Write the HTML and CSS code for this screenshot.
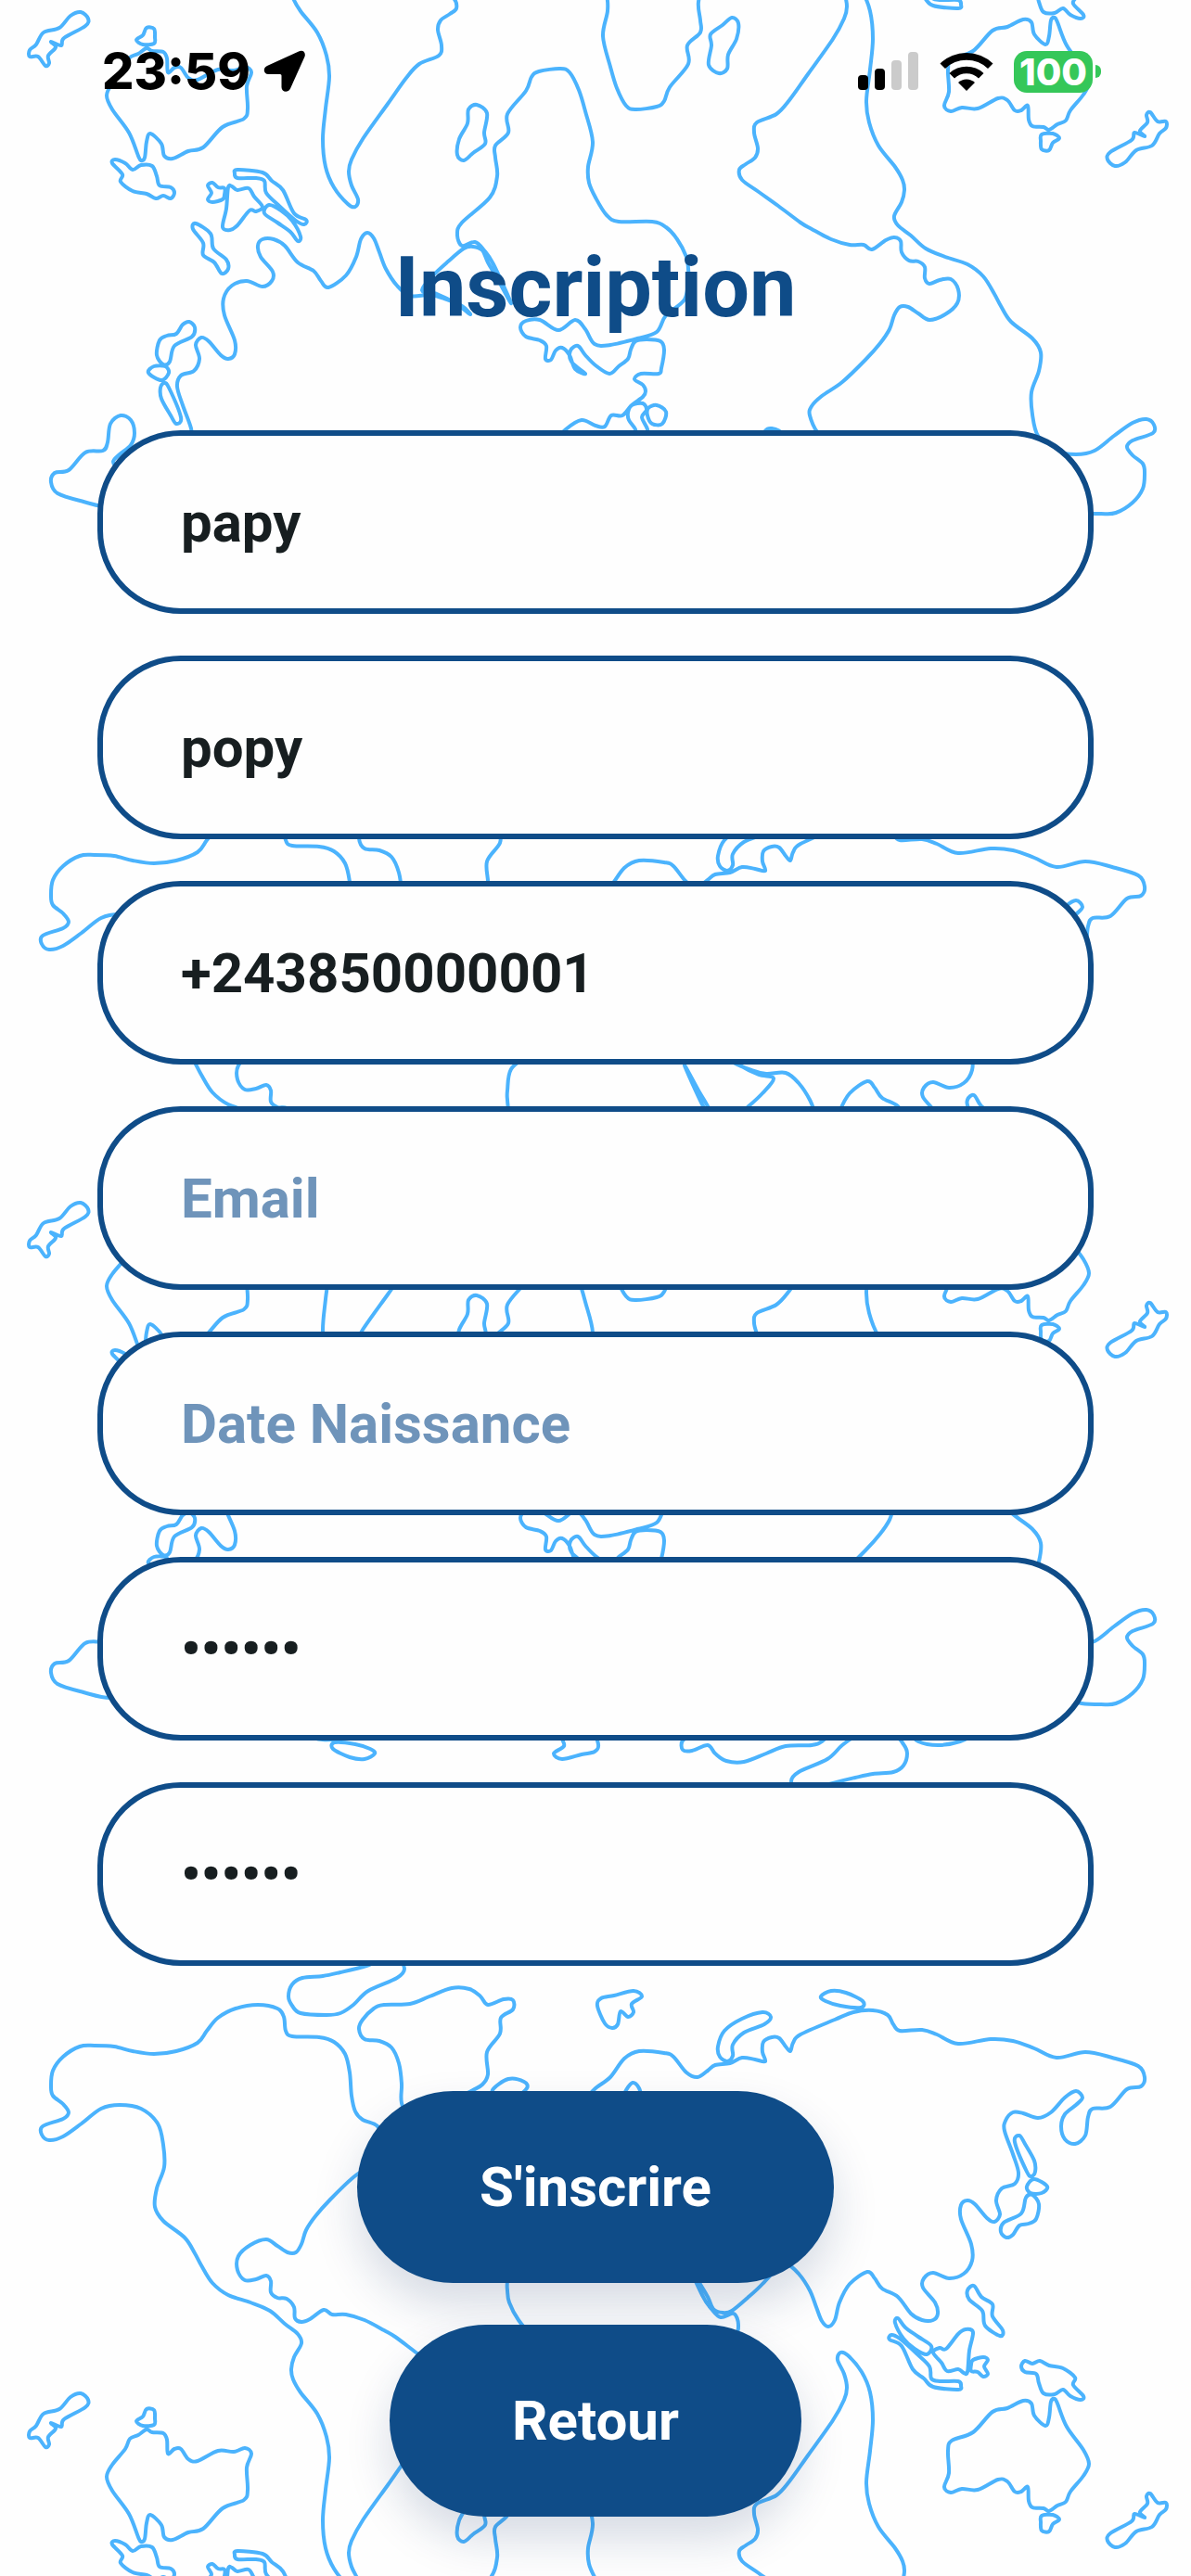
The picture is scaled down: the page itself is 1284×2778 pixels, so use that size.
FILE: index.html
```
<!doctype html>
<html lang="fr">
<head>
	<meta charset="utf-8">
	<meta name="viewport" content="width=device-width, initial-scale=1">
	<title>Inscription</title>
	<link rel="stylesheet" href="styles.css">
</head>
<body>
	<svg class="map" viewBox="0 0 1284 2778" preserveAspectRatio="xMidYMin slice" aria-hidden="true">
		<defs>
			<path id="world" d=""/>
		</defs>
		<use href="#world" transform="translate(0 -568)"/>
		<use href="#world" transform="translate(0 716)"/>
		<use href="#world" transform="translate(0 2000)"/>
		<use href="#world" transform="translate(1289 760) rotate(180)"/>
		<use href="#world" transform="translate(1289 2044) rotate(180)"/>
		<use href="#world" transform="translate(1289 3328) rotate(180)"/>
	</svg>

	<div class="screen">
		<header class="status">
			<div class="status-left">
				<span class="time">23:59</span>
				<svg class="arrow" width="46" height="46" viewBox="0 0 46 46">
					<path d="M38 1.500C42 -0.500 46 2 44.500 7L29 41.500C26.500 46.500 19.500 45.500 19.500 40V27.500Q19.500 26 18 26H5.500C0 26 -1 19.500 4 17Z"/>
				</svg>
			</div>
			<div class="status-right">
				<svg width="66" height="42" viewBox="0 0 66 42">
					<rect x="0" y="25" width="11" height="16" rx="4"/>
					<rect x="18" y="18" width="11" height="23" rx="4"/>
					<rect x="36" y="9" width="11" height="32" rx="4" fill="#cbcbcb"/>
					<rect x="54" y="0" width="11" height="41" rx="4" fill="#cbcbcb"/>
				</svg>
				<svg width="58" height="42" viewBox="0 0 58 42">
					<path d="M0.500 12.500A41 41 0 0 1 57.500 12.500L52 18A33 33 0 0 0 6 18Z"/>
					<path d="M10.500 23A27 27 0 0 1 47.500 23L42 28.500A19 19 0 0 0 16 28.500Z"/>
					<path d="M20 33A13 13 0 0 1 38 33L29 42Z"/>
				</svg>
				<div class="battery"><span class="level">100</span></div>
			</div>
		</header>

		<h1>Inscription</h1>

		<form class="signup">
			<input type="text" aria-label="Nom" value="papy">
			<input type="text" aria-label="Prénom" value="popy">
			<input type="tel" aria-label="Téléphone" value="+243850000001">
			<input type="email" aria-label="Email" placeholder="Email">
			<input type="text" aria-label="Date Naissance" placeholder="Date Naissance">
			<input type="password" aria-label="Mot de passe" value="papy12">
			<input type="password" aria-label="Confirmer le mot de passe" value="papy12">
			<div class="actions">
				<button type="submit">S'inscrire</button>
				<button type="button">Retour</button>
			</div>
		</form>
	</div>
	<script src="script.js"></script>
</body>
</html>
```
FILE: styles.css
```
* {
	box-sizing: border-box;
}

body {
	margin: 0;
	background-color: #fefefe;
	font-family: Roboto, sans-serif;
}

/* coastlines behind the form */
.map {
	position: absolute;
	top: 0;
	left: 0;
	width: 100%;
	height: 100%;
	fill: none;
	stroke: #4bb3fd;
	stroke-width: 4px;
	stroke-linejoin: round;
}

.screen {
	position: relative;
	min-height: 100vh;
	padding: 0 105px 64px;
}

.status {
	display: flex;
	justify-content: space-between;
	align-items: center;
	height: 154px;
	margin-right: -8px;
	padding-left: 5px;
	font-family: Inter, sans-serif;
	font-weight: 800;
}

.status-left {
	display: flex;
	align-items: center;
	gap: 14px;
}

.status-right {
	display: flex;
	align-items: center;
	gap: 22px;
}

.time {
	font-size: 54px;
	line-height: 64px;
}

.battery {
	display: flex;
	align-items: center;
	gap: 3px;
}

.battery::after {
	content: "";
	width: 6px;
	height: 14px;
	border-radius: 0 6px 6px 0;
	background-color: #35c759;
}

.level {
	width: 85px;
	height: 45px;
	border-radius: 14px;
	background-color: #35c759;
	color: white;
	font-size: 40px;
	line-height: 45px;
	text-align: center;
}

h1 {
	margin: 104px 0 100px;
	color: #0f4c88;
	font-size: 90px;
	line-height: 106px;
	font-weight: 700;
	text-align: center;
}

.signup {
	display: flex;
	flex-direction: column;
	gap: 45px;
}

input {
	width: 100%;
	height: 198px;
	padding: 0 84px;
	border: 6px solid #0f4c88;
	border-radius: 90px;
	background-color: #fefefe;
	color: #171e20;
	font-family: Roboto, sans-serif;
	font-size: 60px;
	font-weight: 700;
	outline: none;
}

input::placeholder {
	color: #6f94ba;
	opacity: 1;
}

.actions {
	display: flex;
	flex-direction: column;
	align-items: center;
	gap: 45px;
	margin-top: 90px;
}

button {
	height: 207px;
	padding: 0 132px;
	border: none;
	border-radius: 104px;
	background-color: #0f4c88;
	color: white;
	box-shadow: 0 24px 48px rgba(20, 50, 100, 0.17);
	font-family: Roboto, sans-serif;
	font-size: 60px;
	font-weight: 700;
}
```
FILE: script.js
```
// Closed coastlines, x y pairs
var coasts = [
	// Americas
	"55 250 57 233 68 218 86 207 102 206 123 207 143 212 166 215 190 212 213 203 223 190 235 176 254 166 278 162 299 166 306 175 308 190 315 196 344 197 360 202 372 215 377 235 379 260 383 277 391 286 407 293 416 312 414 322 403 333 381 348 356 372 340 390 330 405 325 420 319 429 310 429 299 422 287 415 270 421 257 433 256 448 264 459 276 458 287 454 292 460 292 472 299 478 309 479 317 488 318 500 325 504 334 501 349 491 358 496 373 496 393 502 414 513 426 520 450 538 471 553 489 566 492 577 485 583 475 590 472 600 476 617 473 628 452 637 438 652 418 680 391 718 379 740 376 753 379 768 386 783 383 791 375 788 360 770 351 748 348 718 351 685 355 651 352 628 342 603 324 580 316 566 314 555 317 542 325 527 321 517 307 506 291 492 270 483 246 475 229 462 217 443 210 430 199 413 176 395 167 380 169 360 177 337 176 313 170 290 152 274 129 270 109 274 88 290 68 304 53 308 45 302 46 293 68 285 74 278 68 269 57 260",
	// Baffin
	"311 153 315 140 326 133 348 131 367 127 395 120 410 114 428 112 436 123 428 133 397 147 381 162 367 171 352 173 324 171 315 163",
	// Greenland
	"387 188 391 178 403 166 414 162 442 161 463 153 487 144 506 145 518 153 526 162 543 156 553 157 553 167 540 176 539 193 525 213 526 237 520 248 508 255 480 270 466 293 457 298 443 290 433 268 433 247 430 225 422 208 409 201 393 199",
	// Iceland
	"531 254 548 242 565 245 568 252 555 262 538 262",
	// Ireland
	"581 323 571 316 575 303 586 303 591 312 590 320",
	// Great Britain
	"612 315 608 323 596 325 592 318 597 310 591 297 592 287 602 287 604 297 611 307",
	// Europe, Africa, Asia
	"642 252 634 262 634 275 645 283 658 280 668 268 675 254 682 246 689 252 692 265 692 282 679 297 662 307 647 301 637 300 630 312 618 312 608 323 596 332 593 338 596 345 605 351 598 357 579 357 576 363 573 383 577 392 592 394 604 392 609 383 612 373 622 365 632 357 647 366 658 377 666 387 674 382 673 370 658 357 669 362 675 377 683 385 690 382 695 372 701 373 700 387 707 393 722 397 728 407 722 414 707 415 687 404 669 415 658 405 648 389 631 388 602 395 581 402 571 420 551 437 547 460 547 470 549 483 559 502 571 515 586 521 622 521 635 528 647 547 654 563 655 580 650 607 658 640 665 663 675 682 685 686 708 683 716 677 722 662 742 637 741 617 755 603 755 590 753 570 761 547 791 520 796 507 791 495 777 499 767 490 757 475 738 433 753 460 763 477 769 490 779 494 789 492 806 478 822 463 834 447 818 443 798 433 782 421 791 430 810 438 826 442 847 441 861 452 873 470 880 488 886 503 893 509 900 502 905 483 916 463 935 450 943 457 951 468 968 477 982 495 994 502 1006 502 1011 495 1008 483 995 467 996 457 1006 451 1023 457 1039 452 1048 438 1047 420 1036 393 1036 378 1043 373 1051 377 1064 392 1072 396 1078 388 1074 373 1080 360 1094 355 1098 343 1092 323 1083 298 1084 287 1092 278 1103 279 1119 284 1133 278 1148 262 1160 255 1167 262 1160 270 1148 280 1144 293 1148 307 1159 312 1170 303 1173 283 1178 274 1197 272 1215 253 1230 250 1234 240 1227 228 1199 219 1170 213 1139 219 1115 209 1092 201 1068 199 1033 204 1010 194 994 189 970 190 963 183 957 173 941 168 920 170 900 178 863 194 855 203 852 212 847 207 840 198 832 197 823 202 822 213 825 223 814 221 800 219 787 225 771 227 763 233 752 240 740 235 726 218 716 214 689 212 673 220 658 240",
	// Madagascar
	"775 647 764 638 767 617 766 605 779 595 789 587 796 593 794 610 785 627 784 642",
	// New Zealand
	"1240 689 1248 699 1257 699 1257 706 1250 712 1242 725 1225 730 1213 743 1202 747 1194 740 1197 732 1220 719 1223 711 1234 715 1229 709 1237 700 1236 692",
	// Australia
	"1103 589 1112 592 1115 605 1127 616 1131 607 1133 590 1137 587 1140 592 1150 617 1168 642 1174 657 1168 670 1154 687 1149 698 1140 702 1131 708 1125 705 1113 704 1109 697 1108 682 1101 687 1094 687 1086 676 1076 674 1054 685 1037 684 1025 688 1018 682 1023 667 1022 643 1026 632 1049 623 1070 601 1086 597",
	// Tasmania
	"1123 713 1135 712 1142 717 1135 722 1131 730 1123 729 1122 720",
	// New Guinea
	"1101 552 1105 546 1113 549 1121 546 1131 551 1146 554 1159 564 1157 572 1168 584 1165 588 1154 584 1146 577 1137 582 1125 581 1120 570 1117 560 1105 558",
	// Philippines
	"1050 465 1058 477 1070 485 1070 498 1081 513 1078 519 1062 508 1059 492 1045 480 1043 470",
	// Sumatra
	"968 500 976 510 990 520 1004 530 999 539 986 533 974 522 965 505",
	// Java
	"961 518 970 522 988 538 1002 552 1004 565 1013 568 1033 568 1036 573 1033 577 1006 574 996 565 984 555 972 530 959 523",
	// Borneo
	"1006 537 1013 532 1020 533 1033 517 1041 512 1049 515 1045 535 1043 558 1039 559 1033 555 1021 557 1015 548",
	// Sulawesi
	"1049 545 1060 542 1065 545 1061 552 1065 560 1060 563 1054 558 1047 557 1047 550",
	// Sakhalin
	"1099 303 1105 312 1115 330 1116 342 1112 347 1107 342 1094 310",
	// Japan
	"1115 350 1129 358 1123 365 1111 365 1107 358",
	"1113 367 1120 377 1117 393 1109 398 1099 400 1092 410 1085 413 1079 407 1082 397 1101 387 1106 370",
	// Arctic islands
	"644 163 648 155 662 152 683 147 692 153 681 161 683 170 677 175 669 169 666 183 660 187 652 182",
	"774 207 781 190 800 177 822 170 831 175 824 183 802 192 790 205 790 217 784 223 776 218",
	"885 153 896 147 912 149 930 158 928 165 906 163 890 158"
];

// smooth closed curve through all the points of one coastline
function coastPath(coast)
{
	var n = coast.split(" ").map(Number);
	var count = n.length;
	var d = "M" + n[0] + " " + n[1];
	for (var i = 0; i < count; i += 2)
	{
		var p = (i - 2 + count) % count;
		var a = (i + 2) % count;
		var b = (i + 4) % count;
		d += "C" + (n[i] + (n[a] - n[p]) / 6) + " " + (n[i+1] + (n[a+1] - n[p+1]) / 6);
		d += " " + (n[a] - (n[b] - n[i]) / 6) + " " + (n[a+1] - (n[b+1] - n[i+1]) / 6);
		d += " " + n[a] + " " + n[a+1];
	}
	return d + "Z";
}

document.getElementById("world").setAttribute("d", coasts.map(coastPath).join(""));
```
